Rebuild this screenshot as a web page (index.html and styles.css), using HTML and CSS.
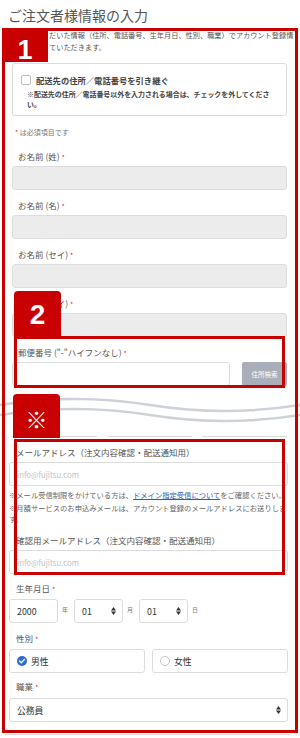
FILE: index.html
```html
<!DOCTYPE html>
<html lang="ja">
<head>
<meta charset="utf-8">
<title>ご注文者様情報の入力</title>
<link rel="stylesheet" href="styles.css">
</head>
<body>
<div class="page">
  <h1 class="title">ご注文者様情報の入力</h1>

  <div class="form-upper">
    <div class="intro">
      <p>だいた情報（住所、電話番号、生年月日、性別、職業）でアカウント登録情</p>
      <p>ていただきます。</p>
    </div>

    <div class="copy-box">
      <div class="copy-row"><span class="checkbox"></span><span class="copy-text">配送先の住所／電話番号を引き継ぐ</span></div>
      <p class="copy-note">※配送先の住所／電話番号以外を入力される場合は、チェックを外してください。</p>
    </div>

    <p class="required-note"><span class="req">*</span> は必須項目です</p>

    <div class="field">
      <div class="label">お名前 (姓) <span class="req">*</span></div>
      <div class="input input-disabled"></div>
    </div>
    <div class="field">
      <div class="label">お名前 (名) <span class="req">*</span></div>
      <div class="input input-disabled"></div>
    </div>
    <div class="field">
      <div class="label">お名前 (セイ) <span class="req">*</span></div>
      <div class="input input-disabled"></div>
    </div>
    <div class="field">
      <div class="label">お名前 (メイ) <span class="req">*</span></div>
      <div class="input input-disabled"></div>
    </div>
    <div class="field">
      <div class="label">郵便番号 ("-"ハイフンなし) <span class="req">*</span></div>
      <div class="postal-row">
        <div class="input"></div>
        <div class="btn">住所検索</div>
      </div>
    </div>
    <div class="label">住所 (都道府県) <span class="req">*</span></div>
    <div class="cut-row"><div class="cut-seg"></div><div class="cut-seg"></div><div class="cut-seg"></div></div>
  </div>

  <div class="form-lower">
    <div class="label mt9">メールアドレス（注文内容確認・配送通知用）</div>
    <div class="input mt4"><span class="ph">info@fujitsu.com</span></div>
    <div class="notes">
      <p class="note">※メール受信制限をかけている方は、<span class="link">ドメイン指定受信について</span>をご確認ください。</p>
      <p class="note">※月額サービスのお申込みメールは、アカウント登録のメールアドレスにお送りします。</p>
    </div>
    <div class="label mt9">確認用メールアドレス（注文内容確認・配送通知用）</div>
    <div class="input mt4"><span class="ph">info@fujitsu.com</span></div>

    <div class="label mt8">生年月日 <span class="req">*</span></div>
    <div class="date-row">
      <div class="box year"><span class="val">2000</span></div>
      <span class="unit">年</span>
      <div class="box sel"><span class="val">01</span><svg class="arrows" width="5" height="8" viewBox="0 0 5 8"><polygon points="0,3.4 2.5,0 5,3.4" /><polygon points="0,4.6 2.5,8 5,4.6" /></svg></div>
      <span class="unit">月</span>
      <div class="box sel"><span class="val">01</span><svg class="arrows" width="5" height="8" viewBox="0 0 5 8"><polygon points="0,3.4 2.5,0 5,3.4" /><polygon points="0,4.6 2.5,8 5,4.6" /></svg></div>
      <span class="unit">日</span>
    </div>

    <div class="label mt9">性別 <span class="req">*</span></div>
    <div class="radio-row">
      <div class="box radio"><svg class="radio-ico" width="10" height="10" viewBox="0 0 10 10"><circle cx="5" cy="5" r="5" fill="#2d6ad6"/><path d="M2.6 5.1 L4.3 6.7 L7.4 3.4" fill="none" stroke="#fff" stroke-width="1.4" stroke-linecap="round" stroke-linejoin="round"/></svg><span class="val">男性</span></div>
      <div class="box radio"><span class="radio-off"></span><span class="val">女性</span></div>
    </div>

    <div class="label mt7">職業 <span class="req">*</span></div>
    <div class="box select"><span class="val">公務員</span><svg class="arrows" width="5" height="8" viewBox="0 0 5 8"><polygon points="0,3.4 2.5,0 5,3.4" /><polygon points="0,4.6 2.5,8 5,4.6" /></svg></div>
    <div class="card-end"></div>
  </div>

  <svg class="annot wave" width="300" height="30" viewBox="0 0 300 30">
    <path d="M0,9 C50,1 100,1 150,9 C200,17 250,17 300,9 L300,19 C250,27 200,27 150,19 C100,11 50,11 0,19 Z" fill="#fff"/>
    <path d="M0,9 C50,1 100,1 150,9 C200,17 250,17 300,9" fill="none" stroke="#cdd1d8" stroke-width="2.5"/>
    <path d="M0,19 C50,11 100,11 150,19 C200,27 250,27 300,19" fill="none" stroke="#cdd1d8" stroke-width="2.5"/>
  </svg>

  <div class="annot frame frame-main"></div>
  <div class="annot frame frame-postal"></div>
  <div class="annot frame frame-email"></div>
  <div class="annot badge badge-1">1</div>
  <div class="annot badge badge-2">2</div>
  <div class="annot badge badge-3">※</div>
</div>
</body>
</html>
```
FILE: styles.css
```css
* { box-sizing: border-box; margin: 0; padding: 0; }
html, body { background: #fff; }
body { font-family: "Noto Sans CJK JP", "Noto Sans", sans-serif; color: #555; }

.page { position: relative; width: 300px; height: 738px; overflow: hidden; }

.title { font-size: 14px; line-height: 20px; font-weight: 400; color: #555; padding: 5px 0 0 8px; }

/* upper form */
.form-upper { padding: 0 13px 0 12px; }
.intro { margin: 4px -9px 0 37px; overflow: hidden; white-space: nowrap; font-size: 7.2px; line-height: 12px; color: #555; }

.copy-box { margin-top: 10px; border: 1px solid #dcdcdc; border-radius: 3px; padding: 10px 8px 6px; }
.copy-row { display: flex; align-items: center; gap: 5px; height: 12px; }
.checkbox { width: 10px; height: 10px; border: 1px solid #bdbdbd; border-radius: 2px; background: #fff; flex: none; }
.copy-text { font-size: 8.3px; font-weight: 700; color: #444; line-height: 12px; }
.copy-note { margin: 3px 0 0 6px; font-size: 6.95px; font-weight: 700; line-height: 10px; color: #444; }

.required-note { margin: 10px 0 12px 3px; font-size: 7px; line-height: 12px; color: #777; }
.req { color: #e2312f; font-size: 7px; }

.label { font-size: 8.5px; line-height: 12px; color: #555; padding-left: 6px; white-space: nowrap; }
.field { margin-bottom: 9px; }
.input { height: 24px; border: 1px solid #dcdcdc; border-radius: 3px; background: #fff; margin-top: 3px; display: flex; align-items: center; }
.input-disabled { background: #ececec; }

.postal-row { display: flex; gap: 12px; margin-top: 3px; }
.postal-row .input { flex: 1; margin-top: 0; }
.btn { width: 45px; height: 24px; background: #a9afb9; color: #fff; font-size: 6.5px; border-radius: 2px; display: flex; align-items: center; justify-content: center; }

.cut-row { display: flex; gap: 10px; height: 29px; }
.cut-seg { flex: 1; border-bottom: 1px solid #dcdcdc; }

/* lower form */
.form-lower { padding: 0 12px 0 9px; }
.form-lower .label { padding-left: 7px; }
.mt4 { margin-top: 4px; }
.mt7 { margin-top: 7px; }
.mt8 { margin-top: 8px; }
.mt9 { margin-top: 9px; }

.ph { color: #c4c4c4; font-size: 7.8px; padding-left: 7px; }

.notes { margin: 4px -4px 0 0; font-size: 7.3px; line-height: 11px; color: #666; }
.note + .note { margin-top: 2px; }
.link { color: #2b5cb8; text-decoration: underline; }

.box { height: 24px; border: 1px solid #dcdcdc; border-radius: 3px; background: #fff; display: flex; align-items: center; }
.val { font-size: 8.8px; color: #333; }
.date-row { display: flex; align-items: center; margin-top: 4px; }
.year { width: 49px; padding-left: 7px; }
.sel { width: 49px; padding: 0 6px 0 7px; justify-content: space-between; }
.unit { font-size: 6px; color: #777; width: 6px; margin: -3px 6px 0 4px; }
.arrows { fill: #333; }

.radio-row { display: flex; gap: 7px; margin-top: 4px; }
.radio { flex: 1; padding-left: 7px; gap: 4px; }
.radio-ico { flex: none; }
.radio-off { width: 10px; height: 10px; border: 1px solid #c6c6c6; border-radius: 50%; flex: none; }

.select { margin-top: 5px; padding: 0 6px 0 7px; justify-content: space-between; }

.card-end { margin: 12px -2px 0 -4px; border-top: 1px solid #e0e0e0; }

/* annotations */
.annot { position: absolute; box-sizing: border-box; }
.wave { left: 0; top: 396px; }
.frame { border: 3px solid #c80000; }
.frame-main { left: 2px; top: 28px; width: 296px; height: 705px; }
.frame-postal { left: 14px; top: 336px; width: 271px; height: 52px; }
.frame-email { left: 14px; top: 439px; width: 271px; height: 136px; }

.badge { background: #c80000; color: #fff; text-align: center; font-family: "Liberation Sans", Arial, sans-serif; font-weight: 700; border-radius: 4px 4px 0 0; }
.badge-1 { left: 2px; top: 28px; width: 46px; height: 34px; font-size: 27px; line-height: 27px; padding-top: 9px; border-radius: 3px 0 0 0; }
.badge-2 { left: 14px; top: 291px; width: 47px; height: 45px; font-size: 28px; line-height: 28px; padding-top: 10px; }
.badge-3 { left: 13px; top: 394px; width: 47px; height: 44px; font-family: "Noto Sans CJK JP", sans-serif; font-size: 22px; line-height: 44px; padding-top: 2px; }
```
